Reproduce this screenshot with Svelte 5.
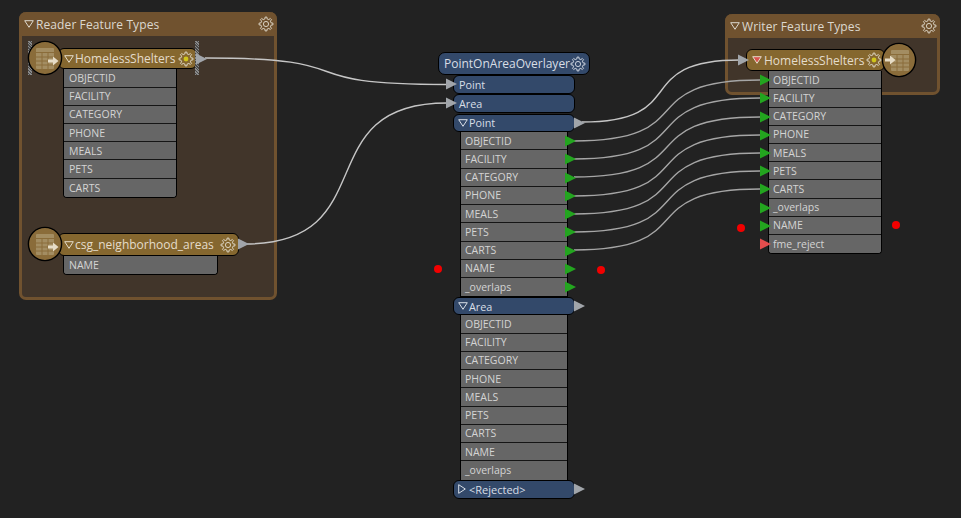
<script>
  const common = ['OBJECTID', 'FACILITY', 'CATEGORY', 'PHONE', 'MEALS', 'PETS', 'CARTS'];
  const overlayOut = [...common, 'NAME', '_overlaps'];
  const writerAttrs = [...common, '_overlaps', 'NAME', 'fme_reject'];

  function gearPath(r = 7, inner = 5.2, teeth = 8) {
    let d = '';
    const step = (Math.PI * 2) / teeth;
    for (let i = 0; i < teeth; i++) {
      const a = i * step - Math.PI / 2;
      const pts = [
        [inner, a - step * 0.5],
        [inner, a - step * 0.26],
        [r, a - step * 0.16],
        [r, a + step * 0.16],
        [inner, a + step * 0.26]
      ];
      pts.forEach(([rad, t], j) => {
        const x = (8 + rad * Math.cos(t)).toFixed(2);
        const y = (8 + rad * Math.sin(t)).toFixed(2);
        d += (i === 0 && j === 0 ? 'M' : 'L') + x + ' ' + y + ' ';
      });
    }
    return d + 'Z';
  }
  const gear = gearPath();

  function wire(x1, y1, x2, y2, k = 0.7) {
    const c = (x2 - x1) * k;
    return `M${x1} ${y1} C${x1 + c} ${y1} ${x2 - c} ${y2} ${x2} ${y2}`;
  }

  const wires = [
    { d: wire(205, 58, 447, 84.5), main: true },
    { d: wire(245, 244, 447, 103), main: true },
    { d: wire(582, 122, 740, 60), main: true },
    { d: wire(574, 141, 760, 80) },
    { d: wire(574, 159, 760, 98) },
    { d: wire(574, 177, 760, 117) },
    { d: wire(574, 196, 760, 135) },
    { d: wire(574, 214, 760, 153) },
    { d: wire(574, 232, 760, 171) },
    { d: wire(574, 250, 760, 189) }
  ];
  const dots = [[438, 269], [601, 270], [741, 228], [896, 225]];
</script>

{#snippet gearIcon(active)}
  <svg class="gear" viewBox="0 0 16 16" width="16" height="16">
    <path d={gear} />
    {#if active}
      <circle class="hub-on" cx="8" cy="8" r="2.4" />
    {:else}
      <circle class="hub" cx="8" cy="8" r="2.6" />
    {/if}
  </svg>
{/snippet}

{#snippet down(color)}
  <svg class="tri" viewBox="0 0 10 8" width="10" height="8">
    <path d="M0.7 0.7H9.3L5 7.3Z" style:fill={color} />
  </svg>
{/snippet}

{#snippet port(kind, cls)}
  <svg class="port {kind} {cls}" viewBox="0 0 11 12" width="11" height="12">
    <path d="M0 0.5L11 6L0 11.5Z" />
  </svg>
{/snippet}

{#snippet table(flip)}
  <svg class="table" viewBox="0 0 36 36" width="36" height="36">
    <circle cx="18" cy="18" r="16.6" class="disc" />
    <rect x={flip ? 10 : 9} y="8" width="18" height="21" rx="1" class="sheet" />
    <path class="lines" transform={flip ? 'translate(1 0)' : ''} d="M9 12.5H27M9 17H27M9 21H27M9 25H27M15 12.5V29M21 12.5V29" />
    <path class="arrow" transform={flip ? 'translate(-17 -3)' : ''} d="M21 19.5H26V16.5L31.5 21L26 25.5V22.5H21Z" />
  </svg>
{/snippet}

{#snippet rows(list)}
  <div class="rows">
    {#each list as name}
      <div class="row"><span>{name}</span></div>
    {/each}
  </div>
{/snippet}

<div class="canvas">
  <section class="book reader">
    <header>{@render down('none')}<span>Reader Feature Types</span>{@render gearIcon(false)}</header>
  </section>
  <section class="book writer">
    <header>{@render down('none')}<span>Writer Feature Types</span>{@render gearIcon(false)}</header>
  </section>

  <svg class="wires" width="961" height="518" viewBox="0 0 961 518">
    {#each wires as w}
      <path class="wire" class:main={w.main} d={w.d} />
    {/each}
  </svg>

  <!-- Reader: HomelessShelters -->
  <div class="node r1">
    <i class="hatch left"></i><i class="hatch right"></i>
    <div class="icon">{@render table(false)}</div>
    <div class="head ft">
      {@render down('none')}<span class="label">HomelessShelters</span>{@render gearIcon(true)}
      {@render port('grey', 'out')}
    </div>
    <div class="list">{@render rows(common)}</div>
  </div>

  <!-- Reader: csg_neighborhood_areas -->
  <div class="node r2">
    <div class="icon">{@render table(false)}</div>
    <div class="head ft">
      {@render down('none')}<span class="label">csg_neighborhood_areas</span>{@render gearIcon(false)}
      {@render port('grey', 'out')}
    </div>
    <div class="list">{@render rows(['NAME'])}</div>
  </div>

  <!-- Transformer -->
  <div class="node xf">
    <div class="title">
      <span class="label">PointOnAreaOverlayer</span>{@render gearIcon(false)}
    </div>
    <div class="bar in">{@render port('grey', 'inp')}<span class="label">Point</span></div>
    <div class="bar in">{@render port('grey', 'inp')}<span class="label">Area</span></div>
    <div class="bar">
      {@render down('none')}<span class="label">Point</span>{@render port('grey', 'out')}
    </div>
    <div class="list">
      <div class="rows">
        {#each overlayOut as name}
          <div class="row"><span>{name}</span>{@render port('green', 'rowout')}</div>
        {/each}
      </div>
    </div>
    <div class="bar">
      {@render down('none')}<span class="label">Area</span>{@render port('grey', 'out')}
    </div>
    <div class="list">{@render rows(overlayOut)}</div>
    <div class="bar last">
      <svg class="tri" viewBox="0 0 8 10" width="8" height="10"><path d="M0.7 0.7L7.3 5L0.7 9.3Z" /></svg>
      <span class="label">&lt;Rejected&gt;</span>{@render port('grey', 'out')}
    </div>
  </div>

  <!-- Writer -->
  <div class="node w1">
    <div class="head ft">
      {@render port('grey', 'inp')}
      {@render down('#d9534f')}<span class="label">HomelessShelters</span>{@render gearIcon(true)}
    </div>
    <div class="icon">{@render table(true)}</div>
    <div class="list">
      <div class="rows">
        {#each writerAttrs as name}
          <div class="row">{@render port(name === 'fme_reject' ? 'red' : 'green', 'rowin')}<span>{name}</span></div>
        {/each}
      </div>
    </div>
  </div>

  {#each dots as [x, y]}
    <i class="dot" style:left="{x - 4}px" style:top="{y - 4}px"></i>
  {/each}
</div>

<style>
  :global(body) { margin: 0; background: #222222; }
  .canvas {
    position: relative;
    width: 961px;
    height: 518px;
    overflow: hidden;
    background: #222222;
    font-family: "Open Sans", "Noto Sans", sans-serif;
    font-size: 10.5px;
    color: #d6d6d6;
  }
  .book {
    position: absolute;
    box-sizing: border-box;
    background: #41352a;
    border: 3px solid #70522f;
    border-top: 0;
    border-radius: 7px;
  }
  .book header {
    display: flex;
    align-items: center;
    gap: 2px;
    height: 24px;
    margin: 0 -3px;
    padding: 0 3px 0 5px;
    background: #70522f;
    border-radius: 7px 7px 0 0;
    color: #dcd8cf;
    font-size: 12px;
    letter-spacing: 0.1px;
  }
  .book header span { flex: 1; }
  .book header .tri { stroke: #dcd8cf; }
  .reader { left: 19px; top: 12px; width: 258px; height: 288px; }
  .writer { left: 725px; top: 14px; width: 215px; height: 81px; }

  .wires { position: absolute; left: 0; top: 0; }
  .wire { fill: none; stroke: #a6a6a6; stroke-width: 1.4; }
  .wire.main { stroke: #c6c6c6; }

  .node { position: absolute; }
  .r1 { left: 63px; top: 48px; width: 114px; }
  .r2 { left: 63px; top: 233px; width: 155px; }
  .xf { left: 438px; top: 52px; width: 152px; }
  .w1 { left: 768px; top: 49px; width: 114px; }

  .head {
    box-sizing: border-box;
    position: relative;
    display: flex;
    align-items: center;
    gap: 1px;
    height: 22px;
    background: #85672f;
    border: 1px solid #000;
    border-radius: 6px;
    color: #e4dccb;
    font-size: 12px;
  }
  .head .tri { margin-left: 2px; stroke: #e4dccb; }
  .r1 .head { margin: 0 -20px 0 -5px; padding: 0 2px 0 3px; height: 21.4px; }
  .r2 .head { margin: 0 -21px 0 -5px; padding: 0 2px 0 3px; height: 23px; }
  .w1 .head { margin: 0 -3px 0 -22px; padding: 0 20px 0 3px; height: 22.3px; gap: 2px; }
  .head .label { flex: 1; white-space: nowrap; }
  .w1 .head .label { flex: none; }
  .head .out { position: absolute; right: -11px; top: 4px; }
  .head .inp { position: absolute; left: -9px; top: 4px; }

  .icon { position: absolute; z-index: 2; width: 36px; height: 36px; }
  .r1 .icon, .r2 .icon { left: -36px; top: -8px; }
  .r2 .icon { top: -7px; }
  .w1 .icon { left: 113px; top: -7px; }
  .table { display: block; }
  .disc { fill: #8a6c3a; stroke: #000; stroke-width: 1.4; }
  .sheet { fill: #a38d62; }
  .lines { fill: none; stroke: #8a6c3a; stroke-width: 1; }
  .arrow { fill: #e6dcc6; }

  .hatch {
    position: absolute;
    z-index: 1;
    top: -7px;
    width: 4px;
    height: 34px;
    background: repeating-linear-gradient(45deg, #8a8a8a 0 1px, #4a4a4a 1px 2px);
  }
  .hatch.left { left: -35px; }
  .hatch.right { left: 132px; }

  .list {
    box-sizing: border-box;
    background: #666;
    border: 1px solid #000;
    border-top: 0;
    border-radius: 0 0 4px 4px;
  }
  .xf .list { margin: 0 22px -0.4px; border-radius: 0; }
  .rows { display: flex; flex-direction: column; width: 100%; }
  .row {
    box-sizing: border-box;
    position: relative;
    display: flex;
    align-items: center;
    height: 18.2px;
    padding-left: 5px;
    background: #666;
    color: #d4d4d4;
    border-bottom: 1px solid #151515;
    font-size: 10.5px;
    white-space: nowrap;
  }
  .xf .row { height: 18.25px; padding-left: 4px; }
  .w1 .row { padding-left: 4px; }
  .row:last-child { border-bottom: 0; border-radius: 0 0 3px 3px; }
  .xf .row:last-child { border-radius: 0; }
  .rowout { position: absolute; right: -9px; top: 3px; }
  .rowin { position: absolute; left: -9px; top: 3px; }

  .title, .bar {
    box-sizing: border-box;
    position: relative;
    display: flex;
    align-items: center;
    background: #33496a;
    border: 1px solid #000;
    color: #d8dee6;
  }
  .title {
    height: 23px;
    padding: 0 4px 0 5px;
    border-radius: 7px;
    font-size: 12px;
  }
  .title .label { flex: 1; white-space: nowrap; }
  .bar {
    margin-left: 15px;
    width: 122px;
    height: 18.5px;
    padding-left: 4px;
    border-radius: 6px;
    font-size: 10.8px;
    gap: 1px;
  }
  .bar .tri { stroke: #d8dee6; }
  .bar.in { padding-left: 5px; margin-bottom: 0.75px; }
  .bar.last { gap: 3px; font-size: 11px; }
  .bar .out { position: absolute; right: -11px; top: 2px; }
  .bar .inp { position: absolute; left: -8px; top: 2px; }

  .tri { flex: none; stroke-width: 1; }
  .tri path { stroke: inherit; fill: none; }
  .port { flex: none; z-index: 3; }
  .grey path { fill: #a1a5aa; }
  .green path { fill: #23a51f; }
  .red path { fill: #e54d4d; }

  .gear { flex: none; }
  .gear path { fill: none; stroke: #e2dccf; stroke-width: 0.9; stroke-linejoin: round; }
  .hub { fill: none; stroke: #e2dccf; stroke-width: 0.9; }
  .hub-on { fill: #cfc41c; }
  .title .gear path, .title .hub { stroke: #d8dee6; }

  .dot {
    position: absolute;
    z-index: 4;
    width: 8px;
    height: 8px;
    border-radius: 50%;
    background: #f20000;
  }
</style>
